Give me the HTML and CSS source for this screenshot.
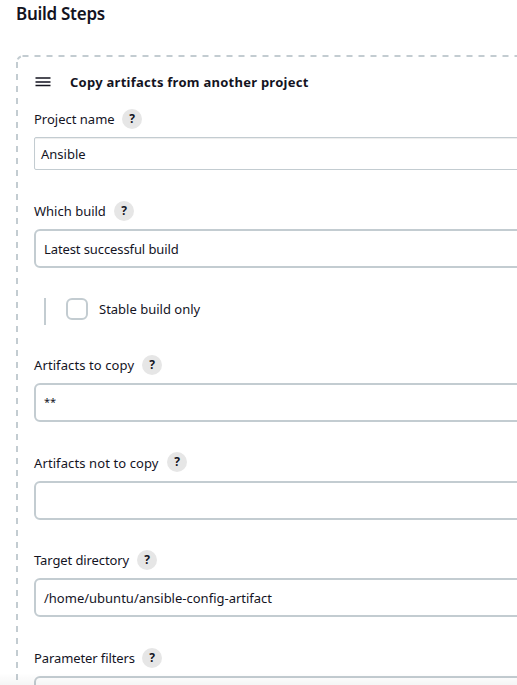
FILE: index.html
```html
<!DOCTYPE html>
<html lang="en">
<head>
<meta charset="utf-8">
<title>Build Steps</title>
<link rel="stylesheet" href="styles.css">
</head>
<body>
<main class="page">
  <h1 class="title">Build Steps</h1>
  <section class="step">
    <svg class="outline" aria-hidden="true"><path class="dashed" d="M1 7v793"/><path class="dashed" d="M6.5 1H700"/><path d="M1.7 4.4Q2.5 2.5 4.8 1.5"/></svg>
    <header class="step-head">
      <svg class="grip" width="16" height="12" viewBox="0 0 16 12" aria-hidden="true"><path d="M.5 2h15M.5 9.5h15"/><path class="mid" d="M.5 6h15"/></svg>
      <h2>Copy artifacts from another project</h2>
    </header>
    <div class="field project">
      <div class="label"><span class="name w80">Project name</span><span class="help">?</span></div>
      <div class="input plain">Ansible</div>
    </div>
    <div class="field build">
      <div class="label"><span class="name w72">Which build</span><span class="help">?</span></div>
      <div class="input tight">Latest successful build</div>
    </div>
    <div class="nested"><span class="check"></span><span>Stable build only</span></div>
    <div class="field copy">
      <div class="label"><span class="name wide w100">Artifacts to copy</span><span class="help">?</span></div>
      <div class="input stars">**</div>
    </div>
    <div class="field exclude">
      <div class="label"><span class="name wide low w125">Artifacts not to copy</span><span class="help">?</span></div>
      <div class="input"></div>
    </div>
    <div class="field target">
      <div class="label"><span class="name tight w95">Target directory</span><span class="help">?</span></div>
      <div class="input">/home/ubuntu/ansible-config-artifact</div>
    </div>
    <div class="field filters">
      <div class="label"><span class="name tight w100">Parameter filters</span><span class="help">?</span></div>
      <div class="input"></div>
    </div>
  </section>
  <div class="fade"></div>
</main>
</body>
</html>
```
FILE: styles.css
```css
* { box-sizing: border-box; }
body { margin: 0; background: #fff; color: #14141f; font: 13px/20px "Noto Sans", sans-serif; }
.page { position: relative; height: 685px; overflow: hidden; padding-left: 16px; }
.title { margin: 0; padding-top: 2px; height: 55px; font-size: 17px; line-height: 24px; font-weight: 600; letter-spacing: -.28px; }
.step { position: relative; width: 702px; height: 802px; padding: 17px 0 0 18px; }
.outline { position: absolute; inset: 0; width: 702px; height: 802px; fill: none; stroke: #c3ccd1; stroke-width: 2; }
.dashed { stroke-dasharray: 6 6; }
.step-head { display: flex; align-items: center; height: 20px; gap: 19px; padding-left: 1px; }
.grip { margin-top: -1px; fill: none; stroke: #14141f; stroke-width: 1.5; }
.grip .mid { stroke: #4c4c56; stroke-width: 2; }
.step-head h2 { margin: 0; font-size: 13px; line-height: 20px; font-weight: 700; letter-spacing: .26px; white-space: nowrap; }
.label { display: flex; align-items: center; gap: 8px; height: 20px; }
.name { white-space: nowrap; }
.wide { letter-spacing: .1px; }
.tight { letter-spacing: -.1px; }
.low { padding-top: 2px; }
.w80 { width: 80px; }
.w72 { width: 72px; }
.w100 { width: 100px; }
.w125 { width: 125px; }
.w95 { width: 95px; }
.help { width: 20px; height: 20px; border-radius: 50%; background: #e6e6e6; text-align: center; font-size: 12px; font-weight: 700; }
.input { display: flex; align-items: center; height: 39px; margin-top: 8px; padding-left: 8px; border: 2px solid #c3ccd1; border-radius: 6px; }
.plain { height: 33px; padding-left: 6px; border: 1px solid #c3ccd1; border-radius: 2px; box-shadow: inset 0 1px 1px rgba(0, 0, 0, .075); }
.stars { font-size: 11px; letter-spacing: -.1px; padding-bottom: 2px; }
.project { margin-top: 17px; }
.build { margin-top: 31px; }
.nested { display: flex; align-items: flex-start; gap: 11px; height: 27px; margin: 30px 0 30px 10px; padding-left: 20px; border-left: 2px solid #c3ccd1; line-height: 22px; }
.check { width: 22px; height: 22px; border: 2px solid #c3ccd1; border-radius: 6px; }
.exclude { margin-top: 30px; }
.exclude .input { margin-top: 9px; }
.target { margin-top: 30px; }
.filters { margin-top: 31px; }
.fade { position: absolute; inset: auto 0 0; height: 12px; background: linear-gradient(rgba(0, 0, 0, 0), rgba(0, 0, 0, .04)); }
```
